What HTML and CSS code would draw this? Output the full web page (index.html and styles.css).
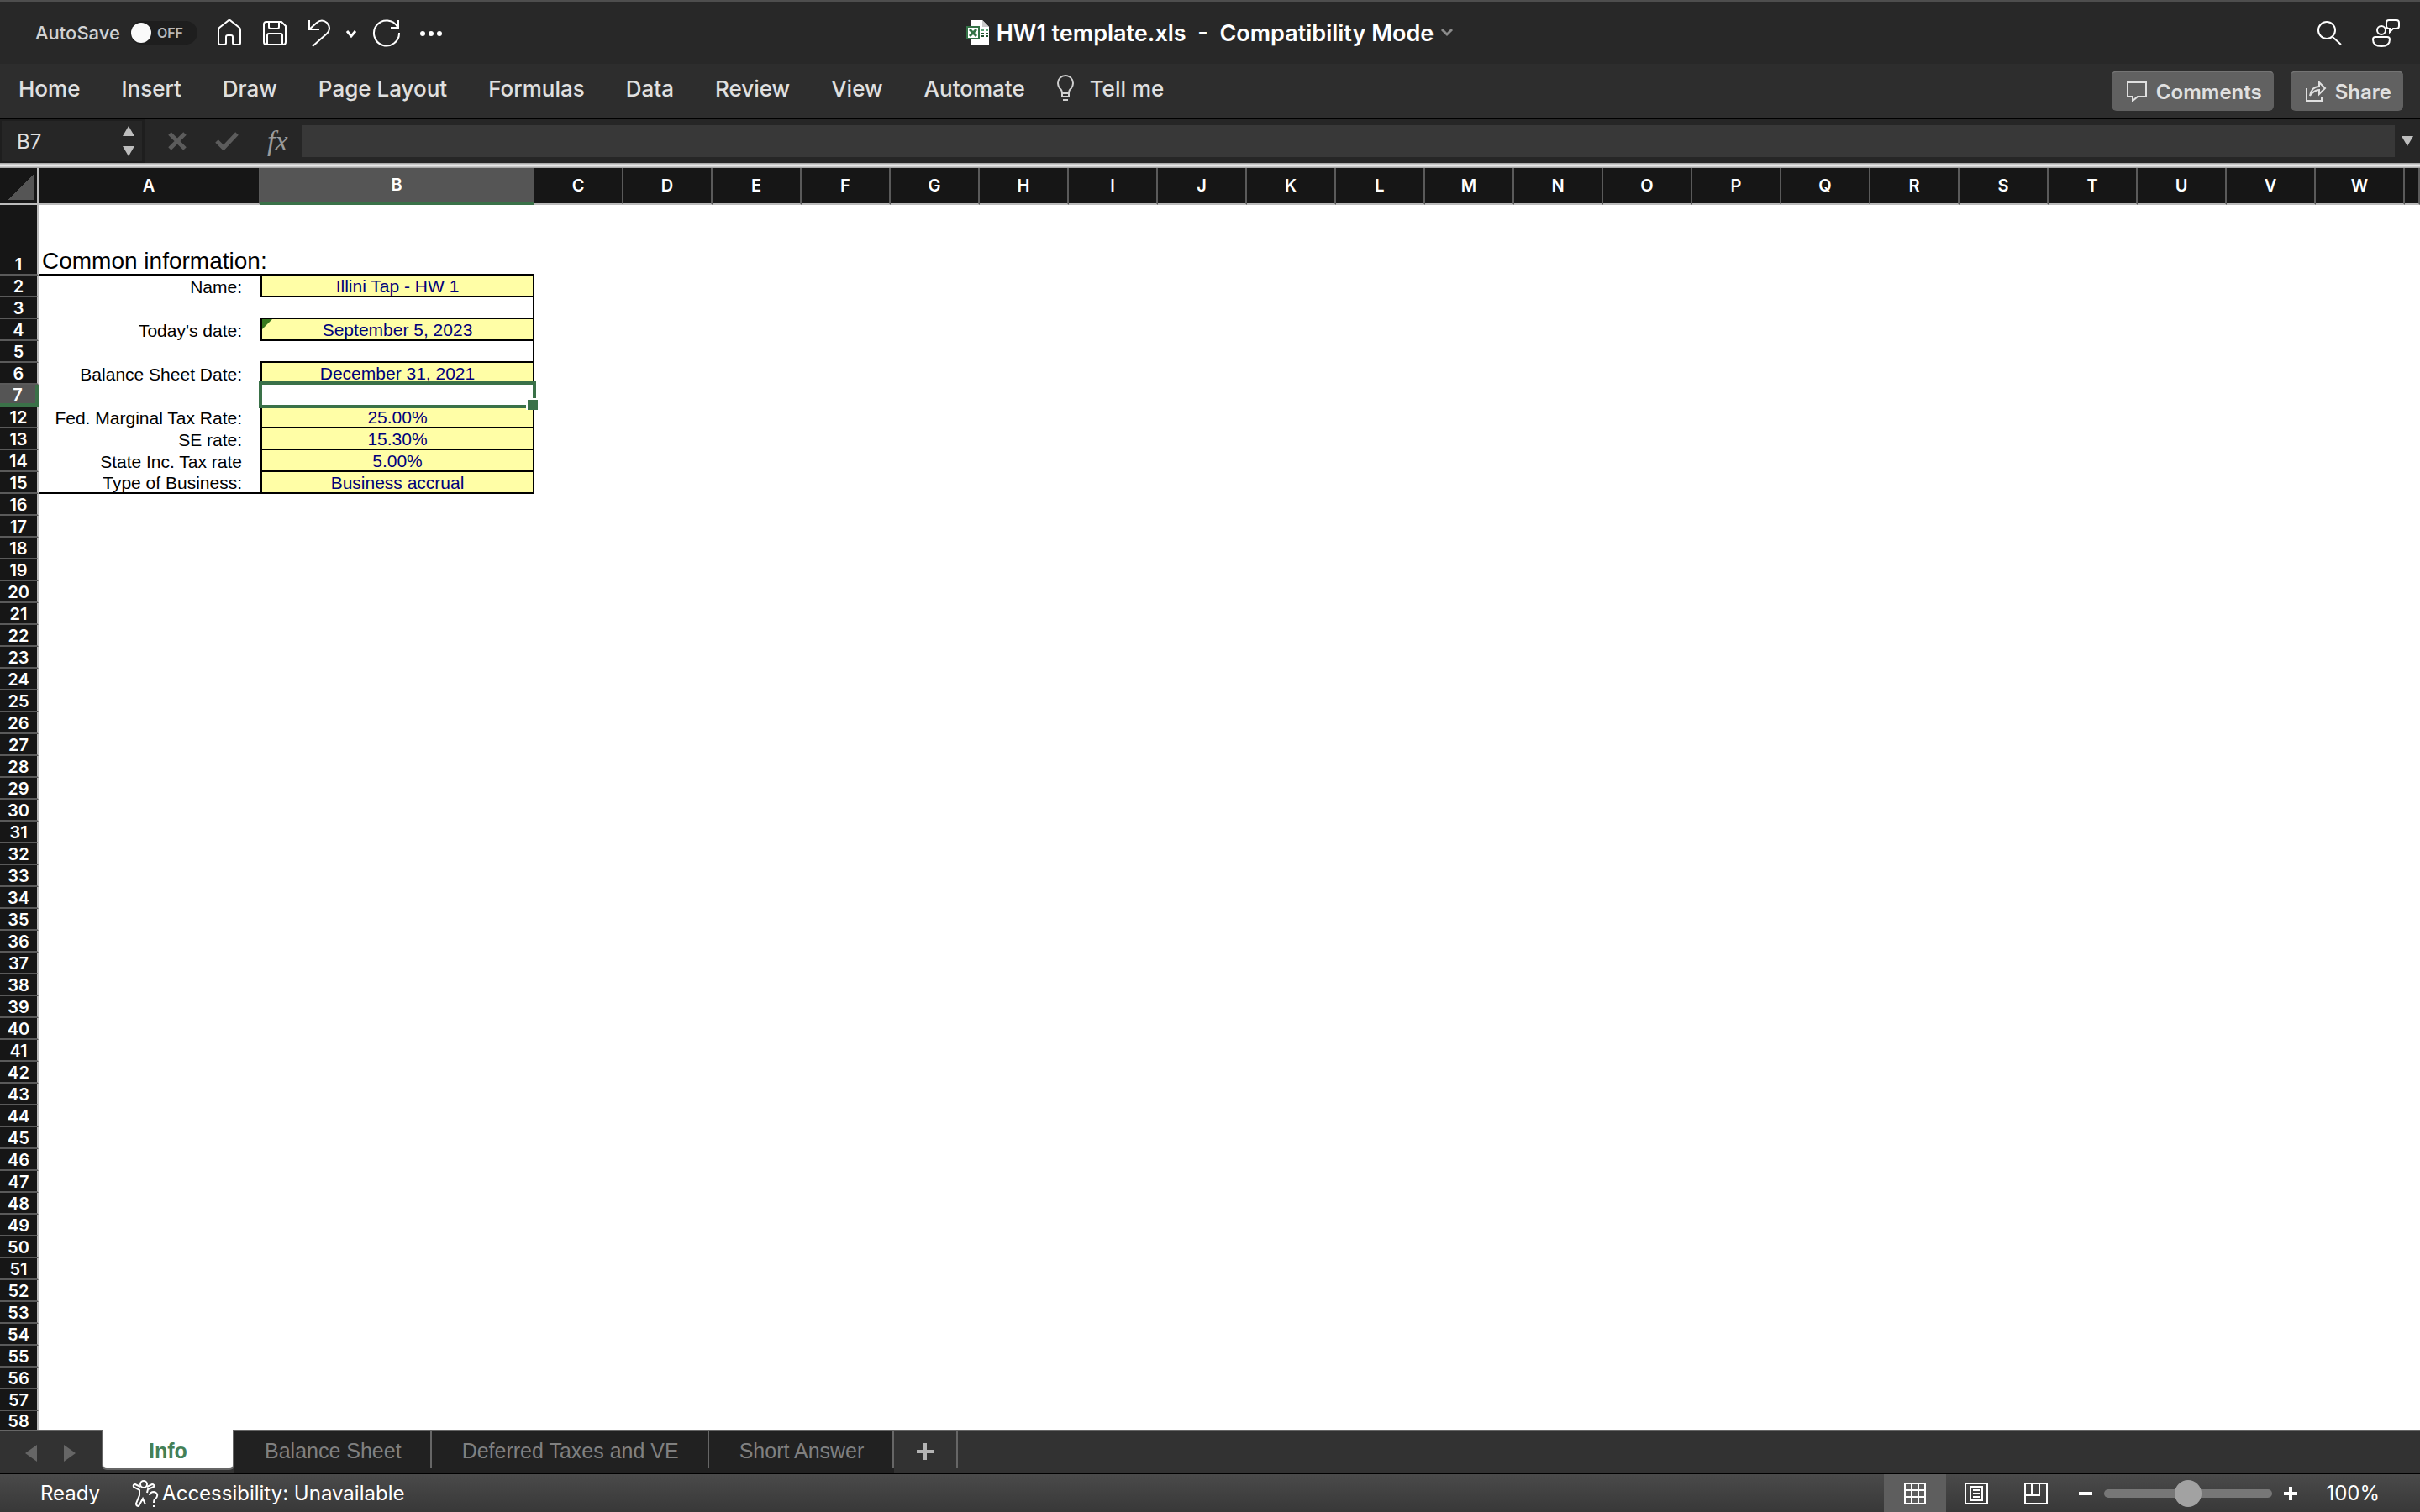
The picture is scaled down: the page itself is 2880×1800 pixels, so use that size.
FILE: index.html
```
<!DOCTYPE html>
<html lang="en">
<head>
  <meta charset="UTF-8" />
  <meta name="viewport" content="width=device-width, initial-scale=1.0" />
  <title>HW1 template.xls</title>
  <link rel="stylesheet" href="styles.css">
</head>
<body>
  <header class="titlebar">
    <div class="quick">
      <label class="autosave">AutoSave
        <input type="checkbox" role="switch">
        <span class="switch">OFF</span>
      </label>
      <button class="icon-btn" aria-label="Home"><svg width="32" height="36" viewBox="0 0 32 36"><path d="M3 15q0-2 1-3L14 4q2-2 4 0l10 8q1 1 1 3v15q0 2-2 2h-5q-2 0-2-2v-7q0-2-2-2h-4q-2 0-2 2v7q0 2-2 2H5q-2 0-2-2z"/></svg></button>
      <button class="icon-btn" aria-label="Save"><svg width="32" height="36" viewBox="0 0 32 36"><path d="M6 5h18l5 5v19q0 3-3 3H6q-3 0-3-3V8q0-3 3-3zM9 5v6q0 2 2 2h8q2 0 2-2V5M7 32V21q0-2 2-2h14q2 0 2 2v11"/></svg></button>
      <button class="icon-btn" aria-label="Undo"><svg width="28" height="36" viewBox="0 0 28 36"><path d="M3 3v11h12M3 14L12 6q6-5 12 0 6 7 0 13L7 34"/></svg></button>
      <button class="icon-btn tight" aria-label="Undo list"><svg width="14" height="36" viewBox="0 0 14 36"><path class="bold" d="M2 16l5 6 5-6"/></svg></button>
      <button class="icon-btn tight" aria-label="Redo"><svg width="34" height="36" viewBox="0 0 34 36"><path d="M31 3v9h-9M30 11A15 15 0 1 0 32 18"/></svg></button>
      <button class="icon-btn" aria-label="More"><svg width="28" height="36" viewBox="0 0 28 36"><g class="solid"><circle cx="4" cy="19" r="3"/><circle cx="14" cy="19" r="3"/><circle cx="24" cy="19" r="3"/></g></svg></button>
    </div>
    <button class="doc-title">
      <svg width="28" height="32" viewBox="0 0 28 32"><path fill="#fff" d="M5 1h14l8 8v21H5z"/><path fill="#ccc" d="M19 1l8 8h-8z"/><path fill="#5ba777" d="M18 12h3v2h-3zm5 0h3v2h-3z"/><path fill="#21532f" d="M18 16h3v2h-3zm5 0h3v2h-3zm-5 3h3v2h-3zm5 0h3v2h-3z"/><path fill="#347347" d="M0 8h16v16H0z"/><path fill="#fff" d="M2 10h12v12H2z"/><path d="M4 12l8 8M12 12l-8 8" stroke="#347347" stroke-width="3"/></svg>
      <span class="doc-name">HW1 template.xls&nbsp; -&nbsp; Compatibility Mode</span>
      <svg width="16" height="12" viewBox="0 0 16 12"><path d="M2 2l6 6 6-6" fill="none" stroke="#8b8b8b" stroke-width="3"/></svg>
    </button>
    <div class="tools">
      <button class="icon-btn" aria-label="Search"><svg width="32" height="36" viewBox="0 0 32 36"><circle cx="13" cy="15" r="10"/><path d="M20 23l10 9"/></svg></button>
      <button class="icon-btn" aria-label="Feedback"><svg width="36" height="36" viewBox="0 0 36 36"><circle cx="12" cy="15" r="5"/><path d="M5 23h14q3 0 3 3 0 8-10 8T2 26q0-3 3-3zM21 3h9q3 0 3 3v4q0 3-3 3h-4l-4 4v-4q-4 0-4-3V6q0-3 3-3z"/></svg></button>
    </div>
  </header>

  <nav class="ribbon">
    <a href="#">Home</a>
    <a href="#">Insert</a>
    <a href="#">Draw</a>
    <a href="#">Page Layout</a>
    <a href="#">Formulas</a>
    <a href="#">Data</a>
    <a href="#">Review</a>
    <a href="#">View</a>
    <a href="#">Automate</a>
    <a href="#" class="tell-me"><svg width="22" height="32" viewBox="0 0 22 32"><path d="M7 22q0-4-3-6-2-3-2-6a9 9 0 0 1 18 0q0 3-2 6-3 2-3 6zM7 22v4h8v-4M8 30h6"/></svg>Tell me</a>
    <div class="ribbon-actions">
      <button><svg width="26" height="26" viewBox="0 0 26 26"><path d="M2 2h22v17H14l-6 5v-5H2z"/></svg>Comments</button>
      <button><svg width="26" height="26" viewBox="0 0 26 26"><path d="M2 9v15h18v-5M6 18q2-11 11-11V2l7 7-7 7v-5q-6 0-11 7z"/></svg>Share</button>
    </div>
  </nav>

  <div class="formula-bar">
    <div class="name-box">
      <input type="text" value="B7" aria-label="Name box">
      <button class="stepper" aria-label="Pick name"><svg width="16" height="38" viewBox="0 0 16 38"><path d="M8 1l7 12H1zM8 37l7-12H1z"/></svg></button>
    </div>
    <div class="formula-btns">
      <button aria-label="Cancel"><svg width="22" height="22" viewBox="0 0 22 22"><path d="M2 2l18 18M20 2L2 20"/></svg></button>
      <button aria-label="Enter"><svg width="28" height="22" viewBox="0 0 28 22"><path d="M2 11l8 8L26 2"/></svg></button>
      <button class="fx" aria-label="Insert function">fx</button>
    </div>
    <input class="formula" type="text" aria-label="Formula">
    <button class="expand" aria-label="Expand"><svg width="14" height="12" viewBox="0 0 14 12"><path d="M0 0h14L7 12z"/></svg></button>
  </div>

  <main class="sheet">
    <table>
      <colgroup id="cols"><col class="col-num"><col class="col-a"><col class="col-b"></colgroup>
      <thead>
        <tr id="letters"><th class="corner"></th><th>A</th><th class="active">B</th></tr>
      </thead>
      <tbody id="rows">
        <tr class="tall"><th>1</th><td class="heading" colspan="2">Common information:</td></tr>
        <tr><th>2</th><td class="label">Name:</td><td class="input">Illini Tap - HW 1</td></tr>
        <tr><th>3</th><td></td><td class="gap"></td></tr>
        <tr><th>4</th><td class="label">Today's date:</td><td class="input flagged">September 5, 2023</td></tr>
        <tr><th>5</th><td></td><td class="gap"></td></tr>
        <tr><th>6</th><td class="label">Balance Sheet Date:</td><td class="input">December 31, 2021</td></tr>
        <tr><th class="active">7</th><td></td><td class="selected"></td></tr>
        <tr><th>12</th><td class="label">Fed. Marginal Tax Rate:</td><td class="input">25.00%</td></tr>
        <tr><th>13</th><td class="label">SE rate:</td><td class="input">15.30%</td></tr>
        <tr><th>14</th><td class="label">State Inc. Tax rate</td><td class="input">5.00%</td></tr>
        <tr class="last"><th>15</th><td class="label">Type of Business:</td><td class="input">Business accrual</td></tr>
      </tbody>
    </table>
  </main>

  <div class="tabs">
    <div class="tab-arrows">
      <button aria-label="Previous sheet"><svg width="16" height="22" viewBox="0 0 16 22"><path d="M15 1v20L1 11z"/></svg></button>
      <button aria-label="Next sheet"><svg width="16" height="22" viewBox="0 0 16 22"><path d="M1 1v20l14-10z"/></svg></button>
    </div>
    <button class="tab current">Info</button>
    <button class="tab">Balance Sheet</button>
    <button class="tab">Deferred Taxes and VE</button>
    <button class="tab">Short Answer</button>
    <button class="add" aria-label="Add sheet"><svg width="20" height="20" viewBox="0 0 20 20"><path d="M10 0v20M0 10h20"/></svg></button>
  </div>

  <footer class="status">
    <span>Ready</span>
    <button class="access"><svg width="32" height="34" viewBox="0 0 32 34"><circle cx="14" cy="6" r="4"/><path d="M10 9L4 6Q1 6 2 9l7 4v6L5 29q0 3 3 3l5-9 3 7M18 9l6-3q3 0 2 3l-7 3-1 4M21 19q1-4 5-4 5 1 4 5 0 2-3 4-1 1-1 4M26 31v2"/></svg>Accessibility: Unavailable</button>
    <div class="views">
      <button class="on" aria-label="Normal"><svg width="28" height="28" viewBox="0 0 28 28"><path d="M2 2h24v24H2zM10 2v24M18 2v24M2 10h24M2 18h24"/></svg></button>
      <button aria-label="Page layout"><svg width="28" height="28" viewBox="0 0 28 28"><path d="M1 2h26v24H1zM7 6h14v16H7zM10 10h8M10 14h8M10 18h8"/></svg></button>
      <button aria-label="Page break"><svg width="28" height="28" viewBox="0 0 28 28"><path d="M1 2h26v24H1zM1 16h17V2M9 2v14"/></svg></button>
    </div>
    <div class="zoom">
      <button aria-label="Zoom out"><svg width="16" height="16" viewBox="0 0 16 16"><path d="M0 8h16"/></svg></button>
      <input type="range" min="0" max="100" value="50" aria-label="Zoom">
      <button aria-label="Zoom in"><svg width="16" height="16" viewBox="0 0 16 16"><path d="M0 8h16M8 0v16"/></svg></button>
      <span class="percent">100%</span>
    </div>
  </footer>

  <script>
    const cols = document.getElementById("cols");
    const letters = document.getElementById("letters");
    const rows = document.getElementById("rows");

    for (const letter of "CDEFGHIJKLMNOPQRSTUVW") {
      cols.insertAdjacentHTML("beforeend", '<col class="col-std">');
      letters.insertAdjacentHTML("beforeend", `<th>${letter}</th>`);
    }
    cols.insertAdjacentHTML("beforeend", "<col>");
    letters.insertAdjacentHTML("beforeend", "<th></th>");

    for (let i = 16; i <= 58; i++) {
      rows.insertAdjacentHTML("beforeend", `<tr><th>${i}</th><td colspan="24"></td></tr>`);
    }
  </script>
</body>
</html>
```
FILE: styles.css
```
* {
  box-sizing: border-box;
}
body {
  margin: 0;
  height: 100vh;
  display: flex;
  flex-direction: column;
  overflow: hidden;
  font-family: Inter, "Liberation Sans", sans-serif;
  font-size: 26px;
  color: #e0e0e0;
  background: #282828;
}
button, input {
  font: inherit;
  color: inherit;
  background: none;
  border: none;
  padding: 0;
  margin: 0;
}
button {
  display: flex;
  align-items: center;
  justify-content: center;
}
svg {
  display: block;
  flex: none;
}

/* title bar */
.titlebar {
  display: grid;
  grid-template-columns: 1fr auto 1fr;
  align-items: center;
  height: 76px;
  border-top: 2px solid #4e4e4e;
}
.quick {
  display: flex;
  align-items: center;
  padding-left: 42px;
  gap: 22px;
}
.autosave {
  display: flex;
  align-items: center;
  gap: 12px;
  font-size: 22px;
  font-weight: 500;
  color: #d2d2d2;
}
.autosave input {
  position: absolute;
  opacity: 0;
}
.switch {
  display: flex;
  align-items: center;
  gap: 7px;
  width: 80px;
  height: 28px;
  padding-left: 1px;
  border-radius: 14px;
  background: #1e1e1e;
  font-size: 16px;
  font-weight: 600;
  color: #b8b8b8;
}
.switch::before {
  content: "";
  width: 24px;
  height: 24px;
  border-radius: 50%;
  background: #fafafa;
}
.icon-btn svg {
  fill: none;
  stroke: #fff;
  stroke-width: 2;
}
.icon-btn .bold {
  stroke-width: 3;
}
.icon-btn .solid {
  fill: #fff;
  stroke: none;
}
.icon-btn.tight {
  margin-left: -4px;
}
.doc-title {
  gap: 8px;
  font-size: 27px;
  font-weight: 600;
  color: #fff;
}
.tools {
  display: flex;
  justify-content: flex-end;
  gap: 34px;
  padding-right: 22px;
}

/* ribbon */
.ribbon {
  display: flex;
  align-items: center;
  gap: 49px;
  height: 66px;
  padding: 0 20px 0 22px;
  background: #2d2d2d;
  border-bottom: 2px solid #000;
}
.ribbon a {
  padding-bottom: 6px;
  color: #e0e0e0;
  text-decoration: none;
  font-weight: 500;
}
.ribbon .tell-me {
  display: flex;
  align-items: center;
  gap: 18px;
  margin-left: -12px;
}
.tell-me svg {
  fill: none;
  stroke: #d0d0d0;
  stroke-width: 2;
}
.ribbon-actions {
  display: flex;
  gap: 20px;
  margin-left: auto;
}
.ribbon-actions button {
  gap: 10px;
  height: 48px;
  padding: 0 14px 0 17px;
  border-radius: 6px;
  border-top: 2px solid #747474;
  background: #616161;
  font-size: 24px;
  font-weight: 600;
}
.ribbon-actions svg {
  fill: none;
  stroke: #e0e0e0;
  stroke-width: 2;
}

/* formula bar */
.formula-bar {
  display: flex;
  align-items: center;
  height: 52px;
  background: #262626;
}
.name-box {
  display: flex;
  align-items: center;
  width: 172px;
  height: 52px;
  padding: 0 8px 0 18px;
  border: 2px solid #1e1e1e;
  border-width: 2px 3px 2px 2px;
  font-size: 24px;
}
.name-box input {
  flex: 1;
  min-width: 0;
}
.stepper svg, .expand svg {
  fill: #bdbdbd;
}
.formula-btns {
  display: flex;
  align-items: center;
  gap: 34px;
  padding: 0 16px 0 28px;
}
.formula-btns svg {
  fill: none;
  stroke: #5c5c5c;
  stroke-width: 5;
}
.fx {
  font: italic 34px "Liberation Serif", serif;
  color: #9a9a9a;
}
.formula {
  flex: 1;
  height: 38px;
  background: #383838;
}
.expand {
  width: 30px;
}

/* grid */
.sheet {
  flex: 1;
  min-height: 0;
  overflow: hidden;
  padding-top: 6px;
  background: linear-gradient(#999, #f8f8f8, #999) top / 100% 6px no-repeat #fff;
}
table {
  width: 100%;
  table-layout: fixed;
  border-collapse: separate;
  border-spacing: 0;
}
.col-num {
  width: 46px;
}
.col-a {
  width: 264px;
}
.col-b {
  width: 326px;
}
.col-std {
  width: 106px;
}
th {
  padding: 0;
  background: #161616;
  color: #fff;
  font-size: 20px;
  font-weight: 600;
}
thead th {
  height: 44px;
  border-right: 2px solid #5a5a5a;
  border-bottom: 2px solid #bcbcbc;
}
thead th.active {
  background: #555;
  border-right-color: #555;
  border-bottom: 4px solid #3a7148;
}
thead .corner {
  border-right-color: #bcbcbc;
  background: linear-gradient(to bottom right, transparent 50%, #555 50%) 10px 8px / 30px 30px no-repeat #161616;
}
tbody th {
  height: 26px;
  padding-top: 2px;
  line-height: 22px;
  border-right: 2px solid #bcbcbc;
  border-bottom: 2px solid #5a5a5a;
}
tbody th.active {
  background: #555;
  border-right: 4px solid #3a7148;
  border-bottom: 4px solid #3a7148;
  line-height: 20px;
}
tbody tr:last-child th {
  height: 22px;
  line-height: 20px;
  border-bottom: none;
}
td {
  padding: 2px 0 0;
  color: #000;
  font: 21px/22px "Liberation Sans", sans-serif;
}
.tall th, .tall td {
  height: 84px;
  vertical-align: bottom;
}
.heading {
  padding-left: 4px;
  font-size: 28px;
  line-height: 30px;
  border-bottom: 2px solid #000;
}
.label {
  padding-right: 22px;
  text-align: right;
}
.input {
  position: relative;
  background: #fffea6;
  color: #00007a;
  text-align: center;
  border: 2px solid #000;
  border-top: none;
}
.gap {
  border-right: 2px solid #000;
  border-bottom: 2px solid #000;
}
.flagged::before {
  content: "";
  position: absolute;
  left: 0;
  top: 0;
  border-top: 12px solid #37791f;
  border-right: 12px solid transparent;
}
.last .label {
  border-bottom: 2px solid #000;
}
.selected {
  position: relative;
}
.selected::before {
  content: "";
  position: absolute;
  inset: -4px -2px -2px -2px;
  border: 4px solid #3a7148;
  z-index: 1;
}
.selected::after {
  content: "";
  position: absolute;
  right: -4px;
  bottom: -4px;
  width: 12px;
  height: 12px;
  background: #3a7148;
  border: solid #fff;
  border-width: 2px 0 0 2px;
  z-index: 1;
}

/* sheet tabs */
.tabs {
  display: flex;
  align-items: flex-start;
  height: 53px;
  border-top: 2px solid #666;
  background: #323232;
  border-bottom: 1px solid #000;
}
.tab-arrows {
  display: flex;
  gap: 30px;
  width: 121px;
  padding: 15px 0 0 29px;
}
.tab-arrows svg {
  fill: #666;
}
.tab {
  height: 50px;
  padding: 0 36px 4px;
  color: #808080;
  background: linear-gradient(#666, #666) right top / 2px 44px no-repeat #212121;
  font: 25px "Liberation Sans", sans-serif;
}
.tab.current {
  height: 48px;
  width: 158px;
  margin-top: -2px;
  padding-bottom: 0;
  padding-top: 4px;
  border: 2px solid #666;
  border-top: none;
  border-radius: 0 0 6px 6px;
  background: #fff;
  color: #438057;
  font-weight: 700;
}
.add {
  width: 76px;
  height: 44px;
  padding-top: 4px;
  border-right: 2px solid #666;
}
.add svg {
  stroke: #b4b4b4;
  stroke-width: 4;
}

/* status bar */
.status {
  display: flex;
  align-items: center;
  height: 45px;
  padding-left: 48px;
  background: linear-gradient(#4a4a4a, #383838);
  color: #fff;
  font-size: 24px;
}
.access {
  gap: 4px;
  margin-left: 38px;
}
.access svg {
  fill: none;
  stroke: #fff;
  stroke-width: 2;
}
.views {
  display: flex;
  height: 45px;
  margin-left: auto;
}
.views button {
  width: 71px;
}
.views .on {
  width: 74px;
  background: #5e5e5e;
}
.views svg {
  fill: none;
  stroke: #fff;
  stroke-width: 2;
}
.zoom {
  display: flex;
  align-items: center;
  gap: 14px;
  padding-right: 48px;
  margin-left: 16px;
}
.zoom svg {
  stroke: #fff;
  stroke-width: 4;
}
.zoom input {
  appearance: none;
  width: 200px;
  height: 10px;
  border-radius: 5px;
  background: #777;
}
.zoom input::-webkit-slider-thumb {
  appearance: none;
  width: 32px;
  height: 32px;
  border-radius: 50%;
  background: #a2a2a2;
}
.percent {
  margin-left: 20px;
}
```
